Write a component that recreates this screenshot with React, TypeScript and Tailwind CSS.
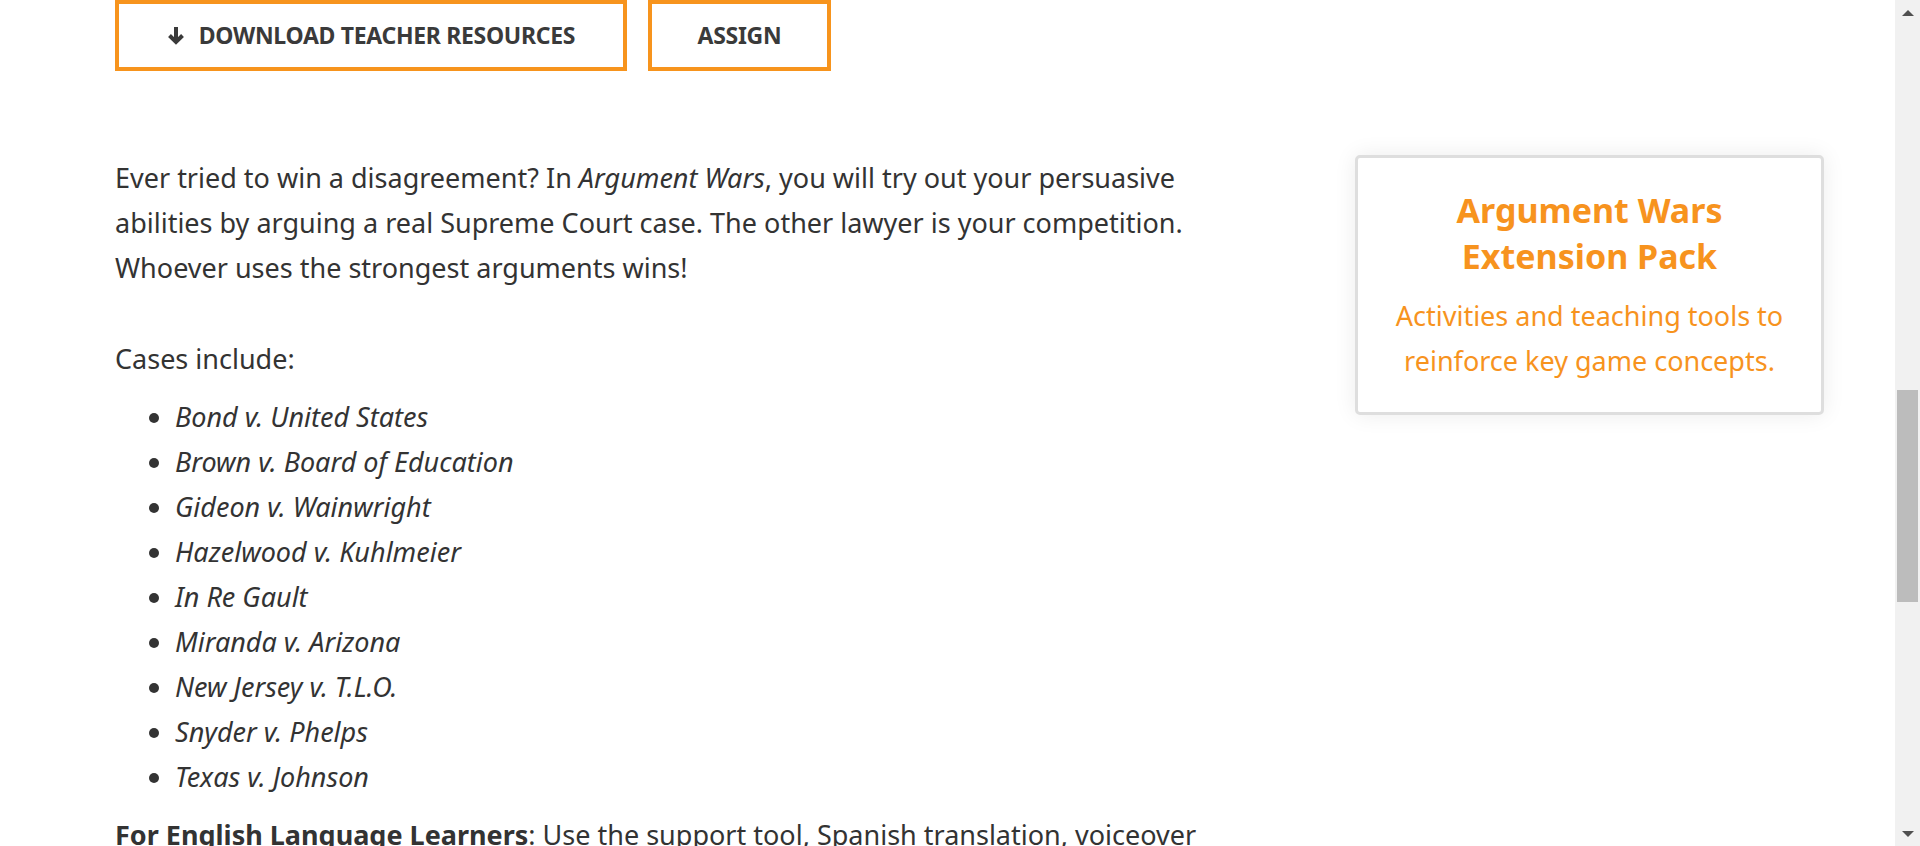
import React from 'react';

const cases = [
  'Bond v. United States',
  'Brown v. Board of Education',
  'Gideon v. Wainwright',
  'Hazelwood v. Kuhlmeier',
  'In Re Gault',
  'Miranda v. Arizona',
  'New Jersey v. T.L.O.',
  'Snyder v. Phelps',
  'Texas v. Johnson',
];

const DownArrow: React.FC = () => (
  <svg width="18" height="19" viewBox="0 0 18 19" fill="none" stroke="currentColor" strokeWidth="4" strokeLinejoin="miter">
    <path d="M9 1 V16" />
    <path d="M2.5 9.5 L9 16 L15.5 9.5" />
  </svg>
);

const Scrollbar: React.FC = () => (
  <div className="flex h-full w-[25px] flex-col items-center bg-[#f1f1f1]">
    <div className="flex h-[25px] w-full items-center justify-center">
      <svg width="12" height="6" viewBox="0 0 12 6">
        <polygon points="0,6 6,0 12,6" fill="#505050" />
      </svg>
    </div>
    <div className="mt-[365px] h-[212px] w-[21px] bg-[#bcbcbc]" />
    <div className="flex-1" />
    <div className="flex h-[25px] w-full items-center justify-center">
      <svg width="12" height="6" viewBox="0 0 12 6">
        <polygon points="0,0 12,0 6,6" fill="#505050" />
      </svg>
    </div>
  </div>
);

const App: React.FC = () => {
  return (
    <div className="flex h-[846px] w-full overflow-hidden bg-white font-['Noto_Sans',sans-serif] text-[#333]">
      <div className="flex-1 pl-[115px] pr-[71px]">
        {/* Action buttons */}
        <div className="flex gap-[21px]">
          <button className="flex h-[71px] w-[512px] items-center justify-center gap-[14px] border-4 border-[#f7941d] text-[23px] font-bold uppercase tracking-[-0.3px] text-[#3a3a3a]">
            <DownArrow />
            Download Teacher Resources
          </button>
          <button className="flex h-[71px] w-[183px] items-center justify-center border-4 border-[#f7941d] text-[23px] font-bold uppercase tracking-[-0.3px] text-[#3a3a3a]">
            Assign
          </button>
        </div>

        <div className="mt-[84px] flex">
          {/* Game description */}
          <div className="w-[1100px] text-[27px] leading-[45px]">
            <p className="mb-[46px]">
              Ever tried to win a disagreement? In <em>Argument Wars</em>, you will try out your persuasive
              abilities by arguing a real Supreme Court case. The other lawyer is your competition.
              Whoever uses the strongest arguments wins!
            </p>
            <p>Cases include:</p>
            <ul className="my-[13px] list-disc pl-[60px] marker:text-[#333]">
              {cases.map((c) => (
                <li key={c} className="italic">
                  {c}
                </li>
              ))}
            </ul>
            <p>
              <strong>For English Language Learners</strong>: Use the support tool, Spanish translation, voiceover
              and glossary to help students access the game.
            </p>
          </div>

          {/* Extension pack card */}
          <aside className="ml-auto h-[260px] w-[469px] rounded-[5px] border-[3px] border-[#dedede] bg-white px-[20px] pt-[30px] text-center shadow-[0_0_22px_rgba(0,0,0,0.08)]">
            <h3 className="text-[34px] font-bold leading-[45.5px] text-[#f7931e]">
              Argument Wars
              <br />
              Extension Pack
            </h3>
            <p className="mt-[14px] text-[27px] leading-[45px] text-[#f7931e]">
              Activities and teaching tools to reinforce key game concepts.
            </p>
          </aside>
        </div>
      </div>
      <Scrollbar />
    </div>
  );
};

export default App;
